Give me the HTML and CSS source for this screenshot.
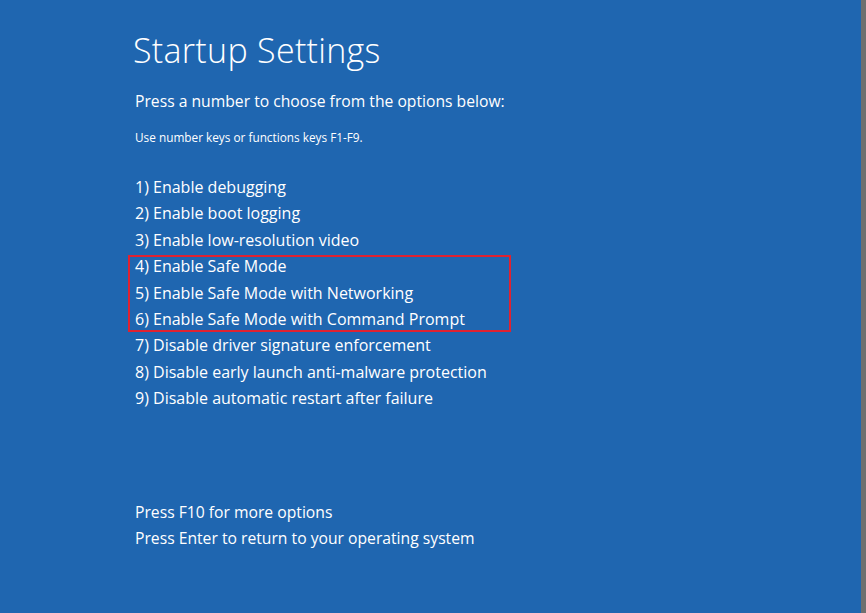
FILE: index.html
```html
<!DOCTYPE html>
<html>
<head>
<meta charset="utf-8">
<link rel="stylesheet" href="styles.css">
</head>
<body>
<div class="screen">
  <main class="panel">
    <h1 class="title">Startup Settings</h1>
    <p class="lead">Press a number to choose from the options below:</p>
    <p class="hint">Use number keys or functions keys F1-F9.</p>
    <ul class="options">
      <li>1) Enable debugging</li>
      <li>2) Enable boot logging</li>
      <li>3) Enable low-resolution video</li>
      <li class="boxed">
        <ul class="group">
          <li>4) Enable Safe Mode</li>
          <li>5) Enable Safe Mode with Networking</li>
          <li>6) Enable Safe Mode with Command Prompt</li>
        </ul>
      </li>
      <li>7) Disable driver signature enforcement</li>
      <li>8) Disable early launch anti-malware protection</li>
      <li>9) Disable automatic restart after failure</li>
    </ul>
    <div class="footer">
      <p>Press F10 for more options</p>
      <p>Press Enter to return to your operating system</p>
    </div>
  </main>
  <div class="edge"></div>
</div>
</body>
</html>
```

FILE: styles.css
```css
html, body {
  margin: 0;
  padding: 0;
  height: 100%;
}
body {
  background: #1f66b0;
  font-family: "Open Sans", "Noto Sans", sans-serif;
  color: #ffffff;
}
.screen {
  display: flex;
  height: 613px;
}
.panel {
  flex: 1;
  background: #1f66b0;
  padding: 28px 0 0 135px;
  display: flex;
  flex-direction: column;
}
.edge {
  width: 5px;
  background: #6f6f6f;
}
.title {
  margin: 0 0 0 -2px;
  font-weight: 300;
  font-size: 34px;
  line-height: 44px;
  letter-spacing: 0.3px;
}
.lead {
  margin: 18px 0 0 0;
  font-size: 15.7px;
  line-height: 22px;
}
.hint {
  margin: 17px 0 0 0;
  font-size: 11.8px;
  line-height: 16px;
}
.options, .group {
  list-style: none;
  margin: 0;
  padding: 0;
}
.options {
  margin-top: 29px;
}
.options li {
  font-size: 16px;
  line-height: 26.4px;
}
.options > .boxed {
  position: relative;
}
.options > .boxed::after {
  content: "";
  position: absolute;
  top: 2px;
  bottom: 0;
  left: -7px;
  width: 383px;
  border: 2px solid #e02230;
  box-sizing: border-box;
}
.footer {
  margin-top: 87px;
}
.footer p {
  margin: 0;
  font-size: 15.7px;
  line-height: 26.6px;
}
```
